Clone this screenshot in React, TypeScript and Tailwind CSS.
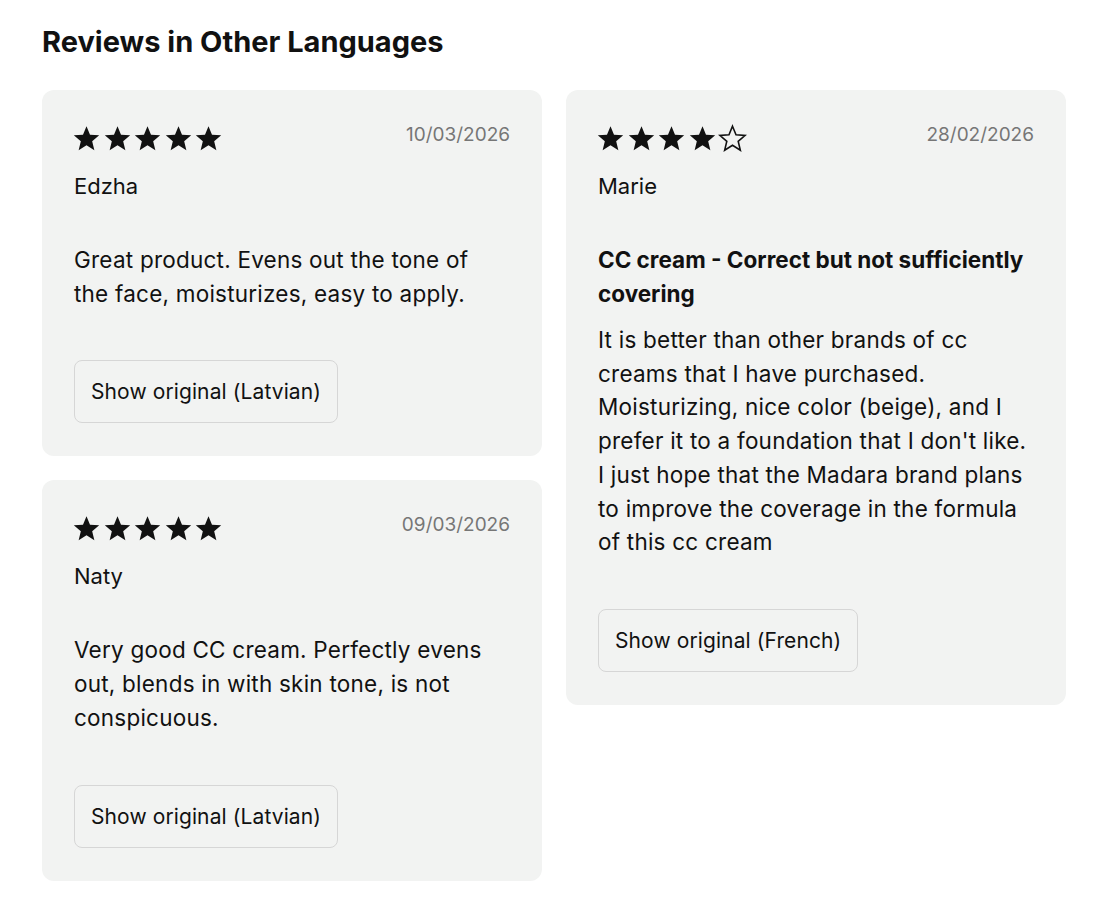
import React from "react";

type Review = {
  rating: number;
  date: string;
  name: string;
  title?: string[];
  body: string[];
  lang: string;
};

function Star({ filled }: { filled: boolean }) {
  return (
    <svg width="29" height="29" viewBox="0 0 24 24" className="shrink-0">
      <path
        d="M12 1.8l2.9 7.1 7.6.5-5.8 4.9 1.8 7.4L12 17.6l-6.5 4.1 1.8-7.4-5.8-4.9 7.6-.5z"
        fill={filled ? "#111111" : "none"}
        stroke="#111111"
        strokeWidth={filled ? 0 : 1.3}
      />
    </svg>
  );
}

function Lines({ lines }: { lines: string[] }) {
  return (
    <>
      {lines.map((l, i) => (
        <span key={i} className="block whitespace-nowrap">
          {l}
        </span>
      ))}
    </>
  );
}

function ReviewCard({ review }: { review: Review }) {
  return (
    <div className="bg-[#f2f3f2] rounded-xl p-8 pb-[33px]">
      <div className="flex justify-between items-start">
        <div className="flex gap-[1.5px] pt-[2px] -ml-[2px]">
          {[1, 2, 3, 4, 5].map((i) => (
            <Star key={i} filled={i <= review.rating} />
          ))}
        </div>
        <span className="text-[19px] leading-[26px] text-[#767676]">{review.date}</span>
      </div>
      <div className="mt-[19px] text-[22px] leading-[28px] text-[#111]">{review.name}</div>
      <div className="mt-[43px]">
        {review.title && (
          <h3 className="text-[22.5px] leading-[34px] font-bold text-[#111] mb-3">
            <Lines lines={review.title} />
          </h3>
        )}
        <p className="text-[22.5px] leading-[33.7px] tracking-[0.01em] text-[#111]">
          <Lines lines={review.body} />
        </p>
      </div>
      <button className="mt-[50px] h-[63px] flex items-center border border-[#d6d6d6] rounded-lg px-4 text-[21px] leading-[29px] tracking-[0.005em] text-[#111] bg-transparent">
        Show original ({review.lang})
      </button>
    </div>
  );
}

export default function App() {
  const left: Review[] = [
    {
      rating: 5,
      date: "10/03/2026",
      name: "Edzha",
      body: ["Great product. Evens out the tone of", "the face, moisturizes, easy to apply."],
      lang: "Latvian",
    },
    {
      rating: 5,
      date: "09/03/2026",
      name: "Naty",
      body: [
        "Very good CC cream. Perfectly evens",
        "out, blends in with skin tone, is not",
        "conspicuous.",
      ],
      lang: "Latvian",
    },
  ];

  const right: Review = {
    rating: 4,
    date: "28/02/2026",
    name: "Marie",
    title: ["CC cream - Correct but not sufficiently", "covering"],
    body: [
      "It is better than other brands of cc",
      "creams that I have purchased.",
      "Moisturizing, nice color (beige), and I",
      "prefer it to a foundation that I don't like.",
      "I just hope that the Madara brand plans",
      "to improve the coverage in the formula",
      "of this cc cream",
    ],
    lang: "French",
  };

  return (
    <div className="min-h-screen bg-white px-[42px] pt-6 pb-10 font-['Inter',sans-serif] text-[#111]">
      <h2 className="text-[29px] leading-[36px] font-bold mb-[30px]">Reviews in Other Languages</h2>
      <div className="grid grid-cols-[500px_500px] gap-6 items-start">
        <div className="flex flex-col gap-6">
          {left.map((r) => (
            <ReviewCard key={r.name} review={r} />
          ))}
        </div>
        <ReviewCard review={right} />
      </div>
    </div>
  );
}
